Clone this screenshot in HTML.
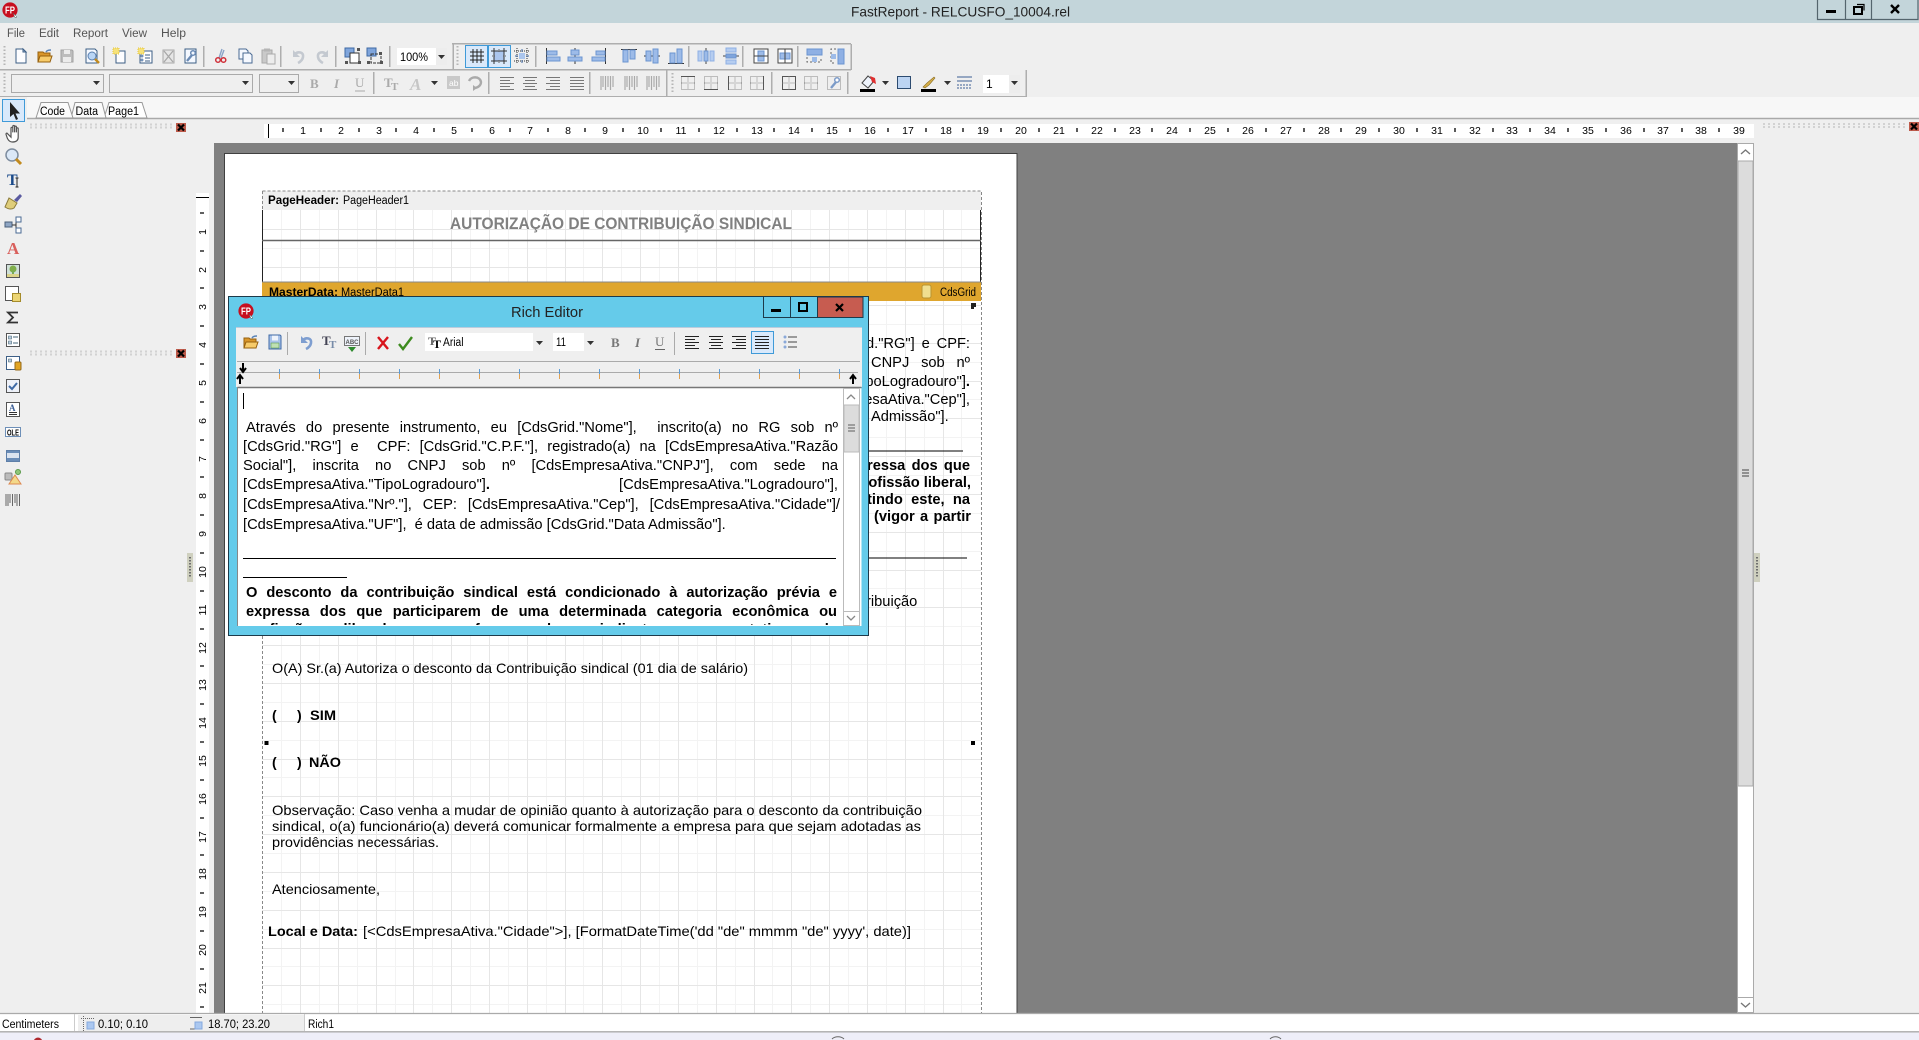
<!DOCTYPE html>
<html lang="pt">
<head>
<meta charset="utf-8">
<title>FastReport - RELCUSFO_10004.rel</title>
<style>
html,body{margin:0;padding:0;width:1919px;height:1040px;overflow:hidden;background:#efefef}
svg{position:absolute;left:0;top:0}
text{font-family:"Liberation Sans",sans-serif;fill:#000}
.j{position:absolute;text-align:justify;text-align-last:justify;font:14.67px/19px "Liberation Sans",sans-serif;color:#000;height:19px;overflow:hidden}
.b{font-weight:bold}
.n{text-align:left;text-align-last:left;white-space:nowrap}
.r{text-align:right;text-align-last:right;white-space:nowrap}
#clip{position:absolute;left:238px;top:388px;width:605px;height:237px;overflow:hidden}
</style>
</head>
<body>
<svg width="1919" height="1040" viewBox="0 0 1919 1040">
<defs>
<g id="doc"><path d="M3 1h7l3 3v11H3z" fill="#fdfdff" stroke="#3d5f86"/><path d="M10 1v3h3z" fill="#c6d6ea" stroke="#3d5f86"/></g>
<g id="folder"><path d="M1 4h5l1 1h6v9H1z" fill="#d9962a" stroke="#96600f"/><path d="M1 14l2-6h12l-2 6z" fill="#f7cb6a" stroke="#96600f"/><path d="M9 4c1-2 3-2 5-2" fill="none" stroke="#5a84b8" stroke-width="1.4"/></g>
<g id="savegrey"><path d="M2 2h11l1 1v11H2z" fill="#bdbdbd" stroke="#a2a2a2"/><rect x="5" y="2" width="6" height="4" fill="#ececec"/><rect x="4" y="9" width="8" height="5" fill="#ececec"/></g>
<g id="saveblue"><path d="M2 1h11l1 1v13H2z" fill="#a9c3ea" stroke="#3f6aa5"/><rect x="5" y="1.500" width="6" height="5" fill="#eef3fb"/><rect x="4" y="9" width="8" height="5" fill="#bfe0b2" stroke="#5e9a55" stroke-width=".6"/></g>
<g id="preview"><path d="M2 1h9l2 2v12H2z" fill="#f4f8ff" stroke="#3d5f86"/><circle cx="8" cy="8" r="4" fill="#b9d5f5" stroke="#5a7fae"/><path d="M11 11l4 4" stroke="#c28a1e" stroke-width="2.400"/></g>
<g id="newpage"><path d="M4 3h9v12H4z" fill="#fdfdff" stroke="#3d5f86"/><rect x="1" y="0" width="6" height="6" fill="#f6e27a" stroke="#e5c53e" stroke-dasharray="1 1"/></g>
<g id="newdlg"><path d="M3 3h12v12H3z" fill="#fdfdff" stroke="#3d5f86"/><path d="M8 7h5M8 10h5M8 13h5" stroke="#3d5f86"/><path d="M4 7h2v2H4zM4 11h2v2H4z" fill="#9dbbe8" stroke="#3d5f86" stroke-width=".5"/><rect x="1" y="0" width="6" height="6" fill="#f6e27a" stroke="#e5c53e" stroke-dasharray="1 1"/></g>
<g id="delpage"><path d="M3 2h11v13H3z" fill="#e6e6e6" stroke="#a8a8a8"/><path d="M4 3l9 11M13 3l-9 11" stroke="#a8a8a8" stroke-width="1.300"/></g>
<g id="wrenchpage"><path d="M3 1h11v14H3z" fill="#f4f8ff" stroke="#3d5f86"/><path d="M5 13l5-6" stroke="#6b8bb5" stroke-width="2.400"/><circle cx="11" cy="5" r="2.300" fill="#f4f8ff" stroke="#6b8bb5" stroke-width="1.500"/></g>
<g id="cut"><path d="M9 1L6 10M11 2l-3 8" stroke="#8aa4c8" stroke-width="1.400"/><circle cx="5" cy="12" r="2.300" fill="none" stroke="#d0303a" stroke-width="1.500"/><circle cx="10.500" cy="12" r="2.300" fill="none" stroke="#d0303a" stroke-width="1.500"/></g>
<g id="copy"><path d="M2 1h7l2 2v8H2z" fill="#f6f9ff" stroke="#4a6a93"/><path d="M6 5h7l2 2v8H6z" fill="#f6f9ff" stroke="#4a6a93"/></g>
<g id="paste"><rect x="2" y="2" width="10" height="13" fill="#c9c9c9" stroke="#a9a9a9"/><rect x="4" y="0.500" width="6" height="3" fill="#b5b5b5"/><path d="M7 6h8v10H7z" fill="#ededed" stroke="#ababab"/></g>
<g id="undo"><path d="M4 6c3-3 9-2 8 3-.5 3-3 5-5 6" fill="none" stroke="#c4c9d0" stroke-width="2.600"/><path d="M2 2v7h7z" fill="#c4c9d0"/></g>
<g id="undob"><path d="M4 6c3-3 9-2 8 3-.5 3-3 5-5 6" fill="none" stroke="#7e9ed0" stroke-width="2.600"/><path d="M2 2v7h7z" fill="#7e9ed0"/></g>
<g id="redo"><path d="M12 6C9 3 3 4 4 9c.5 3 3 5 5 6" fill="none" stroke="#c4c9d0" stroke-width="2.600"/><path d="M14 2v7H7z" fill="#c4c9d0"/></g>
<g id="group"><rect x="0" y="0" width="9" height="9" fill="#7fa5dc" stroke="#3f6aa5"/><rect x="5" y="5" width="9" height="10" fill="#fff" stroke="#333"/><rect x="12" y="0" width="3" height="3" fill="#555"/><rect x="0" y="13" width="3" height="3" fill="#555"/><rect x="13" y="13" width="3" height="3" fill="#555"/></g>
<g id="ungroup"><rect x="0" y="0" width="9" height="8" fill="#7fa5dc" stroke="#3f6aa5"/><rect x="4" y="6" width="10" height="9" fill="none" stroke="#333" stroke-dasharray="3 1"/><rect x="12" y="4" width="3" height="3" fill="#555"/><rect x="0" y="13" width="3" height="3" fill="#555"/><rect x="13" y="13" width="3" height="3" fill="#555"/></g>
<g id="gridi"><path d="M1 4h14M1 8h14M1 12h14M4 1v14M8 1v14M12 1v14" stroke="#222" stroke-width="1"/></g>
<g id="fitg"><rect x="3" y="3" width="10" height="10" fill="#abc6ee"/><path d="M0 3h16M0 13h16M3 0v16M13 0v16" stroke="#333"/><path d="M8 1v3M8 12v3M1 8h3M12 8h3" stroke="#666" stroke-dasharray="1 1"/></g>
<g id="fitg2"><rect x="5" y="5" width="6" height="6" fill="#abc6ee"/><path d="M0 3h16M0 13h16M3 0v16M13 0v16" stroke="#333" stroke-dasharray="1 1"/><path d="M8 1v3M8 12v3M1 8h3M12 8h3" stroke="#3f6aa5"/></g>
<g id="al"><path d="M1.500 0v16" stroke="#333"/><rect x="2" y="3" width="10" height="4" fill="#9dbbe8" stroke="#6b94d0"/><rect x="2" y="9" width="13" height="4" fill="#9dbbe8" stroke="#6b94d0"/></g>
<g id="ac"><path d="M8 0v16" stroke="#333"/><rect x="4" y="2" width="8" height="5" fill="#9dbbe8" stroke="#6b94d0"/><rect x="1" y="9" width="14" height="4" fill="#9dbbe8" stroke="#6b94d0"/></g>
<g id="ar"><path d="M14.500 0v16" stroke="#333"/><rect x="5" y="3" width="9" height="4" fill="#9dbbe8" stroke="#6b94d0"/><rect x="1" y="9" width="13" height="4" fill="#9dbbe8" stroke="#6b94d0"/></g>
<g id="at"><path d="M0 1.500h16" stroke="#333"/><rect x="2" y="2" width="5" height="12" fill="#9dbbe8" stroke="#6b94d0"/><rect x="9" y="2" width="5" height="9" fill="#9dbbe8" stroke="#6b94d0"/></g>
<g id="am"><path d="M0 8h16" stroke="#333"/><rect x="2" y="3" width="5" height="10" fill="#9dbbe8" stroke="#6b94d0"/><rect x="9" y="1" width="5" height="14" fill="#9dbbe8" stroke="#6b94d0"/></g>
<g id="ab"><path d="M0 15.500h16" stroke="#333"/><rect x="2" y="5" width="5" height="10" fill="#9dbbe8" stroke="#6b94d0"/><rect x="9" y="1" width="5" height="14" fill="#9dbbe8" stroke="#6b94d0"/></g>
<g id="sh"><path d="M8 0v16" stroke="#444"/><rect x="0" y="3" width="4" height="10" fill="#b5cdf0" stroke="#8fb0e4"/><rect x="6" y="3" width="4" height="10" fill="#9dbbe8" stroke="#6b94d0"/><rect x="12" y="3" width="4" height="10" fill="#b5cdf0" stroke="#8fb0e4"/></g>
<g id="sv"><path d="M0 8h16" stroke="#444"/><rect x="3" y="0" width="10" height="4" fill="#b5cdf0" stroke="#8fb0e4"/><rect x="3" y="6" width="10" height="4" fill="#7fa5dc" stroke="#6b94d0"/><rect x="3" y="12" width="10" height="4" fill="#b5cdf0" stroke="#8fb0e4"/></g>
<g id="ch"><rect x="1" y="1" width="14" height="14" fill="#fff" stroke="#444"/><rect x="5" y="3" width="6" height="10" fill="#9dbbe8" stroke="#6b94d0"/><path d="M1 8h14" stroke="#444"/></g>
<g id="cv"><rect x="1" y="1" width="14" height="14" fill="#fff" stroke="#444"/><rect x="3" y="5" width="10" height="6" fill="#9dbbe8" stroke="#6b94d0"/><path d="M8 1v14" stroke="#444"/></g>
<g id="w1"><rect x="1" y="1" width="15" height="6" fill="#8fb0e4" stroke="#6b94d0"/><path d="M1 9v5h14V9" fill="none" stroke="#666" stroke-dasharray="2 2"/><rect x="6" y="9" width="5" height="5" fill="#9dbbe8"/></g>
<g id="w2"><rect x="8" y="1" width="6" height="15" fill="#8fb0e4" stroke="#6b94d0"/><path d="M6 1H1v14h5" fill="none" stroke="#666" stroke-dasharray="2 2"/><rect x="1" y="6" width="5" height="5" fill="#9dbbe8"/></g>
<g id="frame1"><path d="M1.500 1.500h13v13h-13z" fill="none" stroke="#888" stroke-dasharray="1 1"/><path d="M8 1.500v13M1.500 8h13" stroke="#888" stroke-dasharray="1 1"/><path d="M1 1.500h14" stroke="#555"/></g>
<g id="frame2"><path d="M1.500 1.500h13v13h-13z" fill="none" stroke="#888" stroke-dasharray="1 1"/><path d="M8 1.500v13M1.500 8h13" stroke="#888" stroke-dasharray="1 1"/><path d="M1 14.500h14" stroke="#555"/></g>
<g id="frame3"><path d="M1.500 1.500h13v13h-13z" fill="none" stroke="#888" stroke-dasharray="1 1"/><path d="M8 1.500v13M1.500 8h13" stroke="#888" stroke-dasharray="1 1"/><path d="M1.500 1v14" stroke="#555"/></g>
<g id="frame4"><path d="M1.500 1.500h13v13h-13z" fill="none" stroke="#888" stroke-dasharray="1 1"/><path d="M8 1.500v13M1.500 8h13" stroke="#888" stroke-dasharray="1 1"/><path d="M14.500 1v14" stroke="#555"/></g>
<g id="frameall"><rect x="1.500" y="1.500" width="13" height="13" fill="none" stroke="#555"/><path d="M8 1.500v13M1.500 8h13" stroke="#888" stroke-dasharray="1 1"/></g>
<g id="framenone"><rect x="1.500" y="1.500" width="13" height="13" fill="none" stroke="#888" stroke-dasharray="1 1"/><path d="M8 1.500v13M1.500 8h13" stroke="#888" stroke-dasharray="1 1"/></g>
<g id="framew"><rect x="1.500" y="1.500" width="13" height="13" fill="none" stroke="#888" stroke-dasharray="1 1"/><path d="M5 13l5-6" stroke="#7c9bc8" stroke-width="2.400"/><circle cx="11" cy="5" r="2.300" fill="#fff" stroke="#7c9bc8" stroke-width="1.500"/></g>
<g id="bar"><path d="M1 0v14M3 0v11M5.500 0v14M8 0v11M10.500 0v14M13 0v11" stroke="#aaa" stroke-width="1.200"/></g>
<g id="textl"><path d="M0 1.500h14M0 4.500h10M0 7.500h14M0 10.500h10M0 13.500h14" stroke="#777"/></g>
<g id="textc"><path d="M0 1.500h14M2 4.500h10M0 7.500h14M2 10.500h10M0 13.500h14" stroke="#777"/></g>
<g id="textr"><path d="M0 1.500h14M4 4.500h10M0 7.500h14M4 10.500h10M0 13.500h14" stroke="#777"/></g>
<g id="textj"><path d="M0 1.500h14M0 4.500h14M0 7.500h14M0 10.500h14M0 13.500h14" stroke="#777"/></g>
<g id="dltl"><path d="M0 1.500h14M0 4.500h10M0 7.500h14M0 10.500h10M0 13.500h14" stroke="#222"/></g>
<g id="dltc"><path d="M0 1.500h14M2 4.500h10M0 7.500h14M2 10.500h10M0 13.500h14" stroke="#222"/></g>
<g id="dltr"><path d="M0 1.500h14M4 4.500h10M0 7.500h14M4 10.500h10M0 13.500h14" stroke="#222"/></g>
<g id="dltj"><path d="M0 1.500h14M0 4.500h14M0 7.500h14M0 10.500h14M0 13.500h14" stroke="#222"/></g>
<g id="fp"><circle cx="8" cy="8" r="7.600" fill="#c70f1f"/><text x="8" y="11.500" text-anchor="middle" font-size="10" font-weight="bold" style="fill:#fff" textLength="10" lengthAdjust="spacingAndGlyphs">FP</text><path d="M11 11l4 4-2 .5z" fill="#fff" stroke="#555" stroke-width=".5"/></g>
<g id="redx"><rect width="10" height="9" fill="#bd5a4a"/><path d="M2 1.500l6 6M8 1.500l-6 6" stroke="#000" stroke-width="2.200"/></g>
<g id="downarr"><path d="M0 0h7l-3.500 4z" fill="#333"/></g>
<g id="sgrip"><rect width="6" height="29" fill="#cfd0bf"/><path d="M3 4v21" stroke="#6e6e6e" stroke-width="2" stroke-dasharray="1.500 1.500"/></g>
</defs>

<!-- base -->
<rect width="1919" height="1040" fill="#efefef"/>
<rect width="1919" height="23" fill="#c3d5da"/>
<use href="#fp" x="2" y="2"/>
<text x="851" y="16.500" font-size="14" textLength="219" lengthAdjust="spacingAndGlyphs" style="fill:#222">FastReport - RELCUSFO_10004.rel</text>
<g fill="none" stroke="#54656d" stroke-width="1.200"><path d="M1817.500 0v19.500H1918V0M1845.500 0v19.500M1871.500 0v19.500"/></g>
<rect x="1826" y="10" width="10" height="3" fill="#000"/>
<rect x="1854" y="7" width="8" height="7" fill="none" stroke="#000" stroke-width="2"/><path d="M1857 4.500h7v6" fill="none" stroke="#000" stroke-width="1.200"/>
<path d="M1891 5l8 8M1899 5l-8 8" stroke="#000" stroke-width="2.400"/>

<!-- menu -->
<g font-size="11.500">
<text x="7" y="37" style="fill:#555" textLength="18" lengthAdjust="spacingAndGlyphs">File</text>
<text x="39" y="37" style="fill:#555" textLength="20" lengthAdjust="spacingAndGlyphs">Edit</text>
<text x="73" y="37" style="fill:#555" textLength="35" lengthAdjust="spacingAndGlyphs">Report</text>
<text x="122" y="37" style="fill:#555" textLength="25" lengthAdjust="spacingAndGlyphs">View</text>
<text x="161" y="37" style="fill:#555" textLength="25" lengthAdjust="spacingAndGlyphs">Help</text>
</g>

<!-- toolbars frame -->
<g stroke="#aeaeae" fill="none" stroke-width="1.500" shape-rendering="crispEdges">
<path d="M0 69.500H851M851 44v26M453 44v26M452 43.500H851"/>
<path d="M0 96.500H1026M1026 70v27M666.500 70v27"/>
<path d="M103.500 46v21M203.500 46v21M280.500 46v21M335.500 46v21M389.500 46v21M535.500 46v21M688.500 46v21M742.500 46v21M797.500 46v21"/>
<path d="M373.500 72v22M488.500 72v22M589.500 72v22M771.500 72v22M847.500 72v22"/>
</g>
<path d="M4.500 46v20M457.500 46v20M4.500 73v20M672.500 73v20" stroke="#b5b5b5" stroke-width="2" stroke-dasharray="1.500 2"/>

<!-- toolbar 1 icons -->
<use href="#doc" x="13" y="48"/><use href="#folder" x="37" y="48"/><use href="#savegrey" x="59" y="48"/><use href="#preview" x="84" y="48"/>
<use href="#newpage" x="112" y="48"/><use href="#newdlg" x="137" y="48"/><use href="#delpage" x="160" y="48"/><use href="#wrenchpage" x="182" y="48"/>
<use href="#cut" x="213" y="48"/><use href="#copy" x="237" y="48"/><use href="#paste" x="260" y="48"/>
<use href="#undo" x="291" y="48"/><use href="#redo" x="314" y="48"/>
<use href="#group" x="345" y="48"/><use href="#ungroup" x="367" y="48"/>
<rect x="397" y="48" width="50" height="17" fill="#fff"/><rect x="436" y="48" width="11" height="17" fill="#ededed"/>
<text x="400" y="61" font-size="12" textLength="28" lengthAdjust="spacingAndGlyphs">100%</text>
<use href="#downarr" x="438" y="55"/>
<rect x="465.500" y="45.500" width="22" height="22" fill="#d9e9fb" stroke="#3f9ad8"/>
<rect x="488.500" y="45.500" width="22" height="22" fill="#d9e9fb" stroke="#3f9ad8"/>
<use href="#gridi" x="469" y="48"/><use href="#fitg" x="491" y="48"/><use href="#fitg2" x="514" y="48"/>
<use href="#al" x="545" y="48"/><use href="#ac" x="567" y="48"/><use href="#ar" x="591" y="48"/>
<use href="#at" x="621" y="48"/><use href="#am" x="644" y="48"/><use href="#ab" x="668" y="48"/>
<use href="#sh" x="698" y="48"/><use href="#sv" x="723" y="48"/>
<use href="#ch" x="753" y="48"/><use href="#cv" x="777" y="48"/>
<use href="#w1" x="806" y="48"/><use href="#w2" x="830" y="48"/>

<!-- toolbar 2 -->
<g fill="#efefef" stroke="#aaa" shape-rendering="crispEdges"><rect x="11.500" y="74.500" width="92" height="18"/><rect x="109.500" y="74.500" width="143" height="18"/><rect x="259.500" y="74.500" width="39" height="18"/></g>
<use href="#downarr" x="93" y="81"/><use href="#downarr" x="242" y="81"/><use href="#downarr" x="288" y="81"/>
<text x="310" y="88" font-size="13" font-weight="bold" style="fill:#aaa;font-family:'Liberation Serif',serif">B</text>
<text x="334" y="88" font-size="13" font-weight="bold" font-style="italic" style="fill:#aaa;font-family:'Liberation Serif',serif">I</text>
<text x="355" y="87" font-size="13" style="fill:#aaa;font-family:'Liberation Serif',serif">U</text>
<text x="384" y="87" font-size="13" font-weight="bold" style="fill:#aaa;font-family:'Liberation Serif',serif">T</text>
<text x="391" y="90" font-size="11" font-weight="bold" style="fill:#aaa;font-family:'Liberation Serif',serif">T</text>
<text x="410" y="90" font-size="17" font-weight="bold" font-style="italic" style="fill:#c6c6c6;font-family:'Liberation Serif',serif">A</text>
<path d="M355 91h10" stroke="#aaa"/>
<use href="#downarr" x="431" y="81"/>
<rect x="447" y="76" width="13" height="13" fill="#c9c9c9"/><text x="449" y="86" font-size="8.500" style="fill:#fff">ab</text>
<path d="M469 81c2-5 11-5 12 1 0 4-4 6-7 6" fill="none" stroke="#aaa" stroke-width="2.400"/><path d="M477 88l-4-3v6z" fill="#aaa"/>
<use href="#textl" x="500" y="76"/><use href="#textc" x="523" y="76"/><use href="#textr" x="546" y="76"/><use href="#textj" x="570" y="76"/>
<use href="#bar" x="600" y="76"/><use href="#bar" x="624" y="76"/><use href="#bar" x="646" y="76"/>
<use href="#frame1" x="680" y="75"/><use href="#frame2" x="703" y="75"/><use href="#frame3" x="727" y="75"/><use href="#frame4" x="749" y="75"/>
<use href="#frameall" x="781" y="75"/><use href="#framenone" x="803" y="75"/><use href="#framew" x="826" y="75"/>
<path d="M862 83l6-7 6 5-6 7z" fill="#eef3fb" stroke="#444"/><path d="M870 76l5 2 1 6-4-2z" fill="#e03030"/><rect x="860" y="89" width="15" height="3" fill="#000"/>
<use href="#downarr" x="882" y="81"/>
<rect x="897.500" y="76.500" width="13" height="12" fill="#bcd4f2" stroke="#2c4b70"/>
<path d="M923 87l4-4 7-6 1 1-6 7-4 3z" fill="#d7b04a" stroke="#8a6d24" stroke-width=".6"/><rect x="921" y="89" width="15" height="3" fill="#000"/>
<use href="#downarr" x="944" y="81"/>
<path d="M957 77h15M957 81h15" stroke="#3d5f96"/><path d="M957 85h15M957 88h15" stroke="#3d5f96" stroke-dasharray="2 1"/>
<rect x="983" y="75" width="37" height="18" fill="#fff"/><rect x="1009" y="75" width="11" height="18" fill="#ededed"/>
<text x="986" y="88" font-size="12">1</text><use href="#downarr" x="1011" y="81"/>

<!-- tab strip -->
<rect x="0" y="97" width="1919" height="21" fill="#f7f7f7"/>
<rect x="0" y="97" width="27" height="25" fill="#efefef"/>
<path d="M27 118.500H1919" stroke="#a9a9a9" stroke-width="1.500"/>
<path d="M104 118l5-15.500h33l5 15.500z" fill="#fff" stroke="#999"/>
<path d="M71 118l4-15.500h27l4 15.500z" fill="#fbfbfb" stroke="#999"/>
<path d="M36 118l5-15.500h27l5 15.500z" fill="#fbfbfb" stroke="#999"/>
<text x="40" y="115" font-size="11.500" textLength="25" lengthAdjust="spacingAndGlyphs">Code</text>
<text x="75.500" y="115" font-size="11.500" textLength="22.500" lengthAdjust="spacingAndGlyphs">Data</text>
<text x="108" y="115" font-size="11.500" textLength="31" lengthAdjust="spacingAndGlyphs">Page1</text>
<rect x="2.500" y="99.500" width="22" height="22" fill="#d9e9fb" stroke="#3f9ad8"/>
<path d="M10 102v15l3.500-3 2.500 6 2-1-2.500-5.500H20z" fill="#222"/>

<!-- grips -->
<g stroke="#d2d2d2" stroke-width="2" stroke-dasharray="2 3">
<path d="M30 124.500h144M30 127.500h144M30 351.500h144M30 354.500h144M1763 124h145M1763 127h145"/>
</g>
<use href="#redx" x="176" y="123"/><use href="#redx" x="176" y="349"/><use href="#redx" x="1909" y="122"/>

<!-- left tools -->
<g transform="translate(5,124)"><path d="M2 8l3 3V3.500c0-1 1.500-1 1.500 0V7V2c0-1 1.500-1 1.500 0v5V2.500c0-1 1.500-1 1.500 0V7V4c0-1 1.500-1 1.500 0v7c0 3-2 4-5 4-2 0-3-1-4-3L1 9c-.5-1 .5-2 1-1z" fill="#fff" stroke="#555" transform="scale(1.2)"/></g>
<g transform="translate(5,148)"><circle cx="7" cy="7" r="6" fill="#dbe8f7" stroke="#7e8d9f" stroke-width="1.500"/><path d="M11 11l5 5" stroke="#c28a1e" stroke-width="3"/></g>
<text x="7" y="185" font-size="16" font-weight="bold" style="fill:#1a4a8a;font-family:'Liberation Serif',serif">T</text><path d="M17 178v9M15.500 178h3M15.500 187h3" stroke="#222"/>
<path d="M5 207l4-9 8 5-3 5c-3 2-6 1-9-1z" fill="#dfcd7a" stroke="#8a7a3a"/><path d="M14 200l6-6 2 2-5 6z" fill="#5a5aa0"/>
<path d="M5 222h7v5H5z" fill="#8fa6c4" stroke="#4a5f7a"/><path d="M12 225h4M16 218v14M16 218h2M16 232h2" stroke="#333"/><path d="M16 217h5v5h-5zM16 228h5v5h-5z" fill="#fff" stroke="#4a6a93"/>
<text x="7" y="254" font-size="17" font-weight="bold" style="fill:#d9605c;font-family:'Liberation Serif',serif">A</text>
<rect x="6.500" y="264.500" width="13" height="13" fill="#cfe0d8" stroke="#555"/><circle cx="13" cy="269" r="3.500" fill="#7fae4a"/><rect x="12" y="271" width="2" height="4" fill="#7a5"/><rect x="7" y="274" width="12" height="3" fill="#dcd48a"/>
<rect x="5.500" y="286.500" width="13" height="14" fill="#fff" stroke="#555"/><rect x="12.500" y="293.500" width="8" height="8" fill="#ecd574" stroke="#a58b2a"/>
<path d="M18 312.500H8l5 5-5 5h10" fill="none" stroke="#333" stroke-width="1.800"/>
<rect x="6.500" y="333.500" width="13" height="13" fill="#fff" stroke="#555"/><path d="M8.500 336h3v3h-3zM8.500 341h3v3h-3z" fill="#bcd" stroke="#467" stroke-width=".6"/><path d="M13 337h5M13 343h5" stroke="#467"/>
<rect x="6.500" y="356.500" width="13" height="13" fill="#fff" stroke="#3d5f86"/><path d="M8.500 359h3v3h-3z" fill="#bcd" stroke="#467" stroke-width=".6"/><rect x="15" y="362" width="6" height="8" rx="1" fill="#e2a523" stroke="#94691a"/>
<rect x="6.500" y="379.500" width="13" height="13" fill="#eef1f8" stroke="#555"/><path d="M9 386l3 3 5-6" fill="none" stroke="#3f6aa5" stroke-width="2"/>
<rect x="6.500" y="402.500" width="13" height="14" fill="#fff" stroke="#555"/><text x="9" y="411" font-size="9" style="fill:#3d5f96;font-family:'Liberation Serif',serif" font-weight="bold">A</text><path d="M9 412.500h8M9 414.500h8" stroke="#333"/>
<rect x="5.500" y="427.500" width="15" height="9" fill="#fff" stroke="#6d8fb8"/><text x="7" y="435.500" font-size="8.500" font-weight="bold" textLength="12" lengthAdjust="spacingAndGlyphs">OLE</text>
<rect x="6.500" y="450.500" width="13" height="11" fill="#dbe4f0" stroke="#5e7fa8"/><rect x="7" y="451" width="12" height="2" fill="#6a8db8"/><rect x="7" y="458" width="12" height="3" fill="#6a8db8"/>
<rect x="5" y="473" width="7" height="7" rx="1" fill="#bbb" stroke="#888"/><path d="M15 475l6 9h-12z" fill="#f3d98a" stroke="#dd8a50"/><circle cx="18" cy="472" r="2.500" fill="#8fc67a" stroke="#5a9a4a"/>
<path d="M6 494v12M8 494v12M10 494v9M12.500 494v12M15 494v9M17 494v12M19.500 494v12" stroke="#666" stroke-width="1"/>

<!-- workspace -->
<rect x="214" y="143" width="1523" height="870" fill="#808080"/>
<rect x="224.500" y="153.500" width="792.500" height="860" fill="#fff" stroke="#404040"/>

<!-- grid -->
<g stroke="#f3f3f3" fill="none" shape-rendering="crispEdges">
<path d="M281.500 210V1013M319.500 210V1013M357.500 210V1013M395.500 210V1013M432.500 210V1013M470.500 210V1013M508.500 210V1013M546.500 210V1013M583.500 210V1013M621.500 210V1013M659.500 210V1013M697.500 210V1013M735.500 210V1013M772.500 210V1013M810.500 210V1013M848.500 210V1013M886.500 210V1013M924.500 210V1013M961.500 210V1013"/>
<path d="M262 248.500H981M262 324.500H981M262 362.500H981M262 399.500H981M262 437.500H981M262 475.500H981M262 513.500H981M262 551.500H981M262 588.500H981M262 626.500H981M262 664.500H981M262 702.500H981M262 740.500H981M262 777.500H981M262 815.500H981M262 853.500H981M262 891.500H981M262 929.500H981M262 966.500H981M262 1004.500H981"/>
</g>
<g stroke="#e6e6e6" fill="none" shape-rendering="crispEdges">
<path d="M300.500 210V1013M338.500 210V1013M376.500 210V1013M413.500 210V1013M451.500 210V1013M489.500 210V1013M527.500 210V1013M565.500 210V1013M602.500 210V1013M640.500 210V1013M678.500 210V1013M716.500 210V1013M754.500 210V1013M791.500 210V1013M829.500 210V1013M867.500 210V1013M905.500 210V1013M943.500 210V1013"/>
<path d="M262 229.500H981M262 267.500H981M262 305.500H981M262 343.500H981M262 381.500H981M262 418.500H981M262 456.500H981M262 494.500H981M262 532.500H981M262 570.500H981M262 607.500H981M262 645.500H981M262 683.500H981M262 721.500H981M262 759.500H981M262 796.500H981M262 834.500H981M262 872.500H981M262 910.500H981M262 948.500H981M262 985.500H981"/>
</g>

<!-- bands -->
<rect x="262" y="191" width="719" height="19" fill="#efefef"/>
<path d="M262.500 191H981.500V1013M262.500 191V1013" fill="none" stroke="#888" stroke-dasharray="3 2"/>
<path d="M262.500 210v72M980.500 210v72" stroke="#222"/>
<path d="M262 240.500H981" stroke="#666" stroke-width="1.400"/>
<path d="M262 282H981" stroke="#888"/>
<rect x="262" y="282.500" width="719" height="18.500" fill="#dfa62e"/>
<text x="268" y="204" font-size="11.500" font-weight="bold" textLength="71" lengthAdjust="spacingAndGlyphs">PageHeader:</text>
<text x="343" y="204" font-size="11.500" textLength="66" lengthAdjust="spacingAndGlyphs">PageHeader1</text>
<text x="269" y="296" font-size="11.500" font-weight="bold" textLength="69" lengthAdjust="spacingAndGlyphs">MasterData:</text>
<text x="341" y="296" font-size="11.500" textLength="63" lengthAdjust="spacingAndGlyphs">MasterData1</text>
<rect x="922" y="285" width="9" height="13" rx="2" fill="#f0df8f" stroke="#b89432"/>
<text x="940" y="296" font-size="11.500" textLength="36" lengthAdjust="spacingAndGlyphs">CdsGrid</text>
<text x="450" y="229" font-size="17" font-weight="bold" textLength="342" lengthAdjust="spacingAndGlyphs" style="fill:#808080">AUTORIZAÇÃO DE CONTRIBUIÇÃO SINDICAL</text>
<path d="M971 303h5v4h-2v2h-3z" fill="#222"/>

<!-- page text visible -->
<path d="M869 451h94M869 558h98" stroke="#000"/>
<text x="272" y="673" font-size="14" textLength="476" lengthAdjust="spacingAndGlyphs">O(A) Sr.(a) Autoriza o desconto da Contribuição sindical (01 dia de salário)</text>
<text x="272" y="720" font-size="14" font-weight="bold">(</text><text x="297" y="720" font-size="14" font-weight="bold">)</text><text x="310" y="720" font-size="14" font-weight="bold" textLength="26" lengthAdjust="spacingAndGlyphs">SIM</text>
<text x="272" y="767" font-size="14" font-weight="bold">(</text><text x="297" y="767" font-size="14" font-weight="bold">)</text><text x="309" y="767" font-size="14" font-weight="bold" textLength="32" lengthAdjust="spacingAndGlyphs">NÃO</text>
<rect x="264.500" y="741" width="4" height="4" fill="#000"/><rect x="971" y="741" width="4" height="4" fill="#000"/>
<text x="272" y="815" font-size="14" textLength="650" lengthAdjust="spacingAndGlyphs">Observação: Caso venha a mudar de opinião quanto à autorização para o desconto da contribuição</text>
<text x="272" y="831" font-size="14" textLength="649" lengthAdjust="spacingAndGlyphs">sindical, o(a) funcionário(a) deverá comunicar formalmente a empresa para que sejam adotadas as</text>
<text x="272" y="847" font-size="14" textLength="167" lengthAdjust="spacingAndGlyphs">providências necessárias.</text>
<text x="272" y="894" font-size="14" textLength="108" lengthAdjust="spacingAndGlyphs">Atenciosamente,</text>
<text x="268" y="936" font-size="14" font-weight="bold" textLength="90" lengthAdjust="spacingAndGlyphs">Local e Data:</text>
<text x="363" y="936" font-size="14" textLength="548" lengthAdjust="spacingAndGlyphs">[&lt;CdsEmpresaAtiva."Cidade"&gt;], [FormatDateTime('dd "de" mmmm "de" yyyy', date)]</text>

<!-- rulers -->
<rect x="264" y="124" width="1490" height="14" fill="#fff"/>
<rect x="196" y="193" width="13" height="820" fill="#fff"/>
<path d="M268.500 124v14M196 197.500h13" stroke="#000"/>
<path d="M283 128v4M321 128v4M359 128v4M396 128v4M434 128v4M472 128v4M510 128v4M548 128v4M585 128v4M623 128v4M661 128v4M699 128v4M737 128v4M774 128v4M812 128v4M850 128v4M888 128v4M926 128v4M963 128v4M1001 128v4M1039 128v4M1077 128v4M1115 128v4M1152 128v4M1190 128v4M1228 128v4M1266 128v4M1304 128v4M1341 128v4M1379 128v4M1417 128v4M1455 128v4M1493 128v4M1530 128v4M1568 128v4M1606 128v4M1644 128v4M1682 128v4M1719 128v4" stroke="#000" stroke-width="1.300"/>
<path d="M200 213h4M200 251h4M200 288h4M200 326h4M200 364h4M200 402h4M200 440h4M200 477h4M200 515h4M200 553h4M200 591h4M200 629h4M200 666h4M200 704h4M200 742h4M200 780h4M200 818h4M200 855h4M200 893h4M200 931h4M200 969h4M200 1007h4" stroke="#000" stroke-width="1.300"/>
<g font-size="10.500">
<text x="303" y="134" text-anchor="middle">1</text><text x="341" y="134" text-anchor="middle">2</text><text x="379" y="134" text-anchor="middle">3</text><text x="416" y="134" text-anchor="middle">4</text><text x="454" y="134" text-anchor="middle">5</text><text x="492" y="134" text-anchor="middle">6</text><text x="530" y="134" text-anchor="middle">7</text><text x="568" y="134" text-anchor="middle">8</text><text x="605" y="134" text-anchor="middle">9</text><text x="643" y="134" text-anchor="middle">10</text><text x="681" y="134" text-anchor="middle">11</text><text x="719" y="134" text-anchor="middle">12</text><text x="757" y="134" text-anchor="middle">13</text><text x="794" y="134" text-anchor="middle">14</text><text x="832" y="134" text-anchor="middle">15</text><text x="870" y="134" text-anchor="middle">16</text><text x="908" y="134" text-anchor="middle">17</text><text x="946" y="134" text-anchor="middle">18</text><text x="983" y="134" text-anchor="middle">19</text><text x="1021" y="134" text-anchor="middle">20</text><text x="1059" y="134" text-anchor="middle">21</text><text x="1097" y="134" text-anchor="middle">22</text><text x="1135" y="134" text-anchor="middle">23</text><text x="1172" y="134" text-anchor="middle">24</text><text x="1210" y="134" text-anchor="middle">25</text><text x="1248" y="134" text-anchor="middle">26</text><text x="1286" y="134" text-anchor="middle">27</text><text x="1324" y="134" text-anchor="middle">28</text><text x="1361" y="134" text-anchor="middle">29</text><text x="1399" y="134" text-anchor="middle">30</text><text x="1437" y="134" text-anchor="middle">31</text><text x="1475" y="134" text-anchor="middle">32</text><text x="1512" y="134" text-anchor="middle">33</text><text x="1550" y="134" text-anchor="middle">34</text><text x="1588" y="134" text-anchor="middle">35</text><text x="1626" y="134" text-anchor="middle">36</text><text x="1663" y="134" text-anchor="middle">37</text><text x="1701" y="134" text-anchor="middle">38</text><text x="1739" y="134" text-anchor="middle">39</text>
<text transform="translate(206,232) rotate(-90)" text-anchor="middle">1</text><text transform="translate(206,270) rotate(-90)" text-anchor="middle">2</text><text transform="translate(206,307) rotate(-90)" text-anchor="middle">3</text><text transform="translate(206,345) rotate(-90)" text-anchor="middle">4</text><text transform="translate(206,383) rotate(-90)" text-anchor="middle">5</text><text transform="translate(206,421) rotate(-90)" text-anchor="middle">6</text><text transform="translate(206,459) rotate(-90)" text-anchor="middle">7</text><text transform="translate(206,496) rotate(-90)" text-anchor="middle">8</text><text transform="translate(206,534) rotate(-90)" text-anchor="middle">9</text><text transform="translate(206,572) rotate(-90)" text-anchor="middle">10</text><text transform="translate(206,610) rotate(-90)" text-anchor="middle">11</text><text transform="translate(206,648) rotate(-90)" text-anchor="middle">12</text><text transform="translate(206,685) rotate(-90)" text-anchor="middle">13</text><text transform="translate(206,723) rotate(-90)" text-anchor="middle">14</text><text transform="translate(206,761) rotate(-90)" text-anchor="middle">15</text><text transform="translate(206,799) rotate(-90)" text-anchor="middle">16</text><text transform="translate(206,837) rotate(-90)" text-anchor="middle">17</text><text transform="translate(206,874) rotate(-90)" text-anchor="middle">18</text><text transform="translate(206,912) rotate(-90)" text-anchor="middle">19</text><text transform="translate(206,950) rotate(-90)" text-anchor="middle">20</text><text transform="translate(206,988) rotate(-90)" text-anchor="middle">21</text>
</g>

<!-- main scrollbar -->
<rect x="1737.500" y="143.500" width="16" height="869" fill="#fff" stroke="#aaa"/>
<rect x="1738" y="161" width="15" height="625" fill="#dcdcdc" stroke="#aaa"/>
<path d="M1741 154l4.500-4 4.500 4" fill="none" stroke="#777" stroke-width="1.400"/>
<path d="M1738 997.500h15" stroke="#aaa"/><path d="M1741 1003l4.500 4 4.500-4" fill="none" stroke="#777" stroke-width="1.400"/>
<path d="M1742 470h7M1742 473h7M1742 476h7" stroke="#777" stroke-width="1.500"/>
<use href="#sgrip" x="187" y="553"/><use href="#sgrip" x="1754" y="553"/>

<!-- status -->
<rect x="0" y="1013" width="1919" height="19" fill="#fff"/>
<rect x="78" y="1015" width="226" height="16" fill="#eee"/>
<path d="M0 1013.500H1919M0 1031.800H1919" stroke="#aaa" stroke-width="1.300"/>
<path d="M74.500 1014v17M304.500 1014v17" stroke="#ccc"/>
<rect x="0" y="1032.500" width="1919" height="7.500" fill="#eeeef8"/>
<circle cx="38" cy="1042" r="4.500" fill="#b02a30"/>
<path d="M832 1039c3-3 9-3 12 0M1270 1039c3-3 8-3 11 0" fill="none" stroke="#666" stroke-width="1"/>
<text x="2" y="1028" font-size="11.500" textLength="57" lengthAdjust="spacingAndGlyphs">Centimeters</text>
<path d="M81 1018.500h14M83.500 1016v15" stroke="#666" stroke-dasharray="1 1"/><rect x="87" y="1022" width="7" height="7" fill="#abc8f0" stroke="#85a9de"/>
<text x="98" y="1028" font-size="11.500" textLength="50" lengthAdjust="spacingAndGlyphs">0.10; 0.10</text>
<path d="M190 1017.500h12M190 1029h6" stroke="#666"/><rect x="195" y="1022" width="7" height="7" fill="#abc8f0" stroke="#85a9de"/>
<text x="208" y="1028" font-size="11.500" textLength="62" lengthAdjust="spacingAndGlyphs">18.70; 23.20</text>
<text x="308" y="1028" font-size="11.500" textLength="26" lengthAdjust="spacingAndGlyphs">Rich1</text>
</svg>

<!-- page text peeking out behind dialog -->
<div class="j" style="left:866px;top:335px;width:104px">d."RG"] e CPF:</div>
<div class="j" style="left:871px;top:354px;width:99px">CNPJ sob nº</div>
<div class="j r" style="left:820px;top:373px;width:150px">poLogradouro"]<b>.</b></div>
<div class="j r" style="left:820px;top:391px;width:150px">esaAtiva."Cep"],</div>
<div class="j n" style="left:871px;top:408px;width:100px">Admissão"].</div>
<div class="j b" style="left:867px;top:457px;width:103px">ressa dos que</div>
<div class="j b r" style="left:820px;top:474px;width:151px">ofissão liberal,</div>
<div class="j b" style="left:867px;top:491px;width:103px">tindo este, na</div>
<div class="j b" style="left:874px;top:508px;width:97px">(vigor a partir</div>
<div class="j n" style="left:866px;top:593px;width:60px">ribuição</div>

<!-- Rich Editor dialog -->
<svg width="1919" height="1040" viewBox="0 0 1919 1040" style="pointer-events:none">
<rect x="228.500" y="296.500" width="640" height="339" fill="#65cbea" stroke="#1d3a4a"/>
<use href="#fp" x="238" y="303"/>
<text x="511" y="317" font-size="14.500" textLength="72" lengthAdjust="spacingAndGlyphs" style="fill:#222">Rich Editor</text>
<rect x="763" y="297" width="55" height="20" fill="#65cbea"/>
<rect x="817.500" y="297" width="45.500" height="20.500" fill="#c75c50" stroke="#1d3a4a"/>
<path d="M763.500 297v20.500H818M790.500 297v20.500" fill="none" stroke="#1d3a4a"/>
<rect x="771" y="309" width="10" height="3" fill="#000"/>
<rect x="799" y="303" width="8" height="8" fill="none" stroke="#000" stroke-width="2"/>
<path d="M836 304l7 7M843 304l-7 7" stroke="#000" stroke-width="2.200"/>
<rect x="236" y="327" width="626" height="60" fill="#efefef"/>
<path d="M236 327.500H862" stroke="#bcd" stroke-width="1"/>
<!-- dialog toolbar -->
<use href="#folder" x="243" y="334"/><use href="#saveblue" x="267" y="334"/>
<path d="M287.500 332v23M365.500 332v23M674.500 332v23" stroke="#aaa"/>
<use href="#undob" x="299" y="334"/>
<text x="322" y="345" font-size="13" font-weight="bold" style="fill:#445;font-family:'Liberation Serif',serif">T</text><text x="329" y="348" font-size="11" font-weight="bold" style="fill:#778ba8;font-family:'Liberation Serif',serif">T</text>
<rect x="344.500" y="336.500" width="15" height="9" fill="#eef3fb" stroke="#777"/><text x="345.500" y="344" font-size="6.500" font-weight="bold" style="fill:#555" textLength="13" lengthAdjust="spacingAndGlyphs">ABC</text><path d="M348 347h8l-4 5z" fill="#2e8b2e"/>
<path d="M378 337l10 12M388 337l-10 12" stroke="#d8141c" stroke-width="2.400"/>
<path d="M399 344l4 5 9-12" fill="none" stroke="#3d8b1f" stroke-width="2.400"/>
<rect x="425" y="333" width="120" height="18" fill="#fff"/><rect x="533" y="333" width="12" height="18" fill="#efefef"/>
<use href="#downarr" x="536" y="341"/>
<text x="428" y="345" font-size="12" font-weight="bold" style="fill:#666;font-family:'Liberation Serif',serif">T</text><text x="433" y="348" font-size="12" font-weight="bold" style="font-family:'Liberation Serif',serif">T</text>
<text x="443" y="346" font-size="11.500" textLength="20.500" lengthAdjust="spacingAndGlyphs">Arial</text>
<rect x="553" y="333" width="43" height="18" fill="#fff"/><rect x="584" y="333" width="12" height="18" fill="#efefef"/>
<text x="556" y="346" font-size="12" textLength="10" lengthAdjust="spacingAndGlyphs">11</text><use href="#downarr" x="587" y="341"/>
<text x="611" y="347" font-size="13" font-weight="bold" style="fill:#777;font-family:'Liberation Serif',serif">B</text>
<text x="635" y="347" font-size="13" font-weight="bold" font-style="italic" style="fill:#777;font-family:'Liberation Serif',serif">I</text>
<text x="655" y="346" font-size="13" style="fill:#777;font-family:'Liberation Serif',serif">U</text><path d="M655 349.500h10" stroke="#666"/>
<use href="#dltl" x="685" y="335"/><use href="#dltc" x="709" y="335"/><use href="#dltr" x="732" y="335"/>
<rect x="751.500" y="331.500" width="22" height="22" fill="#d9e9fb" stroke="#3f9ad8"/><use href="#dltj" x="755" y="335"/>
<path d="M788 337h9M788 342h9M788 347h9" stroke="#444"/><circle cx="785" cy="337" r="1.500" fill="#8aa8d8"/><circle cx="785" cy="342" r="1.500" fill="#8aa8d8"/><circle cx="785" cy="347" r="1.500" fill="#8aa8d8"/>
<!-- dialog ruler -->
<path d="M237 361.500H860M237 372.500H858" stroke="#aaa"/>
<path d="M279.500 369v5M319.500 369v5M359.500 369v5M399.500 369v5M439.500 369v5M479.500 369v5M519.500 369v5M559.500 369v5M599.500 369v5M639.500 369v5M679.500 369v5M719.500 369v5M759.500 369v5M799.500 369v5M839.500 369v5" stroke="#5b9bd5"/>
<path d="M279.500 374v5M319.500 374v5M359.500 374v5M399.500 374v5M439.500 374v5M479.500 374v5M519.500 374v5M559.500 374v5M599.500 374v5M639.500 374v5M679.500 374v5M719.500 374v5M759.500 374v5M799.500 374v5M839.500 374v5" stroke="#e0a050"/>
<path d="M243 363v8M240 368l3 4 3-4" fill="none" stroke="#000" stroke-width="2"/>
<path d="M240 384v-8M237 379l3-4 3 4" fill="none" stroke="#000" stroke-width="2"/>
<path d="M853 384v-8M850 379l3-4 3 4" fill="none" stroke="#000" stroke-width="2"/>
<!-- edit box -->
<rect x="237.500" y="387" width="624" height="239" fill="#fff"/>
<path d="M237.500 387.500H861.500" stroke="#777" stroke-width="1.500"/><path d="M237.500 387v239" stroke="#888"/>
<path d="M243.500 393v16" stroke="#000"/>
<path d="M243 558.500h593M243 577.500h104" stroke="#000"/>
<rect x="843.500" y="388.500" width="16" height="237" fill="#fff" stroke="#bbb"/>
<rect x="844" y="405" width="15" height="47" fill="#dcdcdc" stroke="#bbb"/>
<path d="M847 399l4-4 4 4" fill="none" stroke="#888" stroke-width="1.300"/>
<path d="M844 611.500h15" stroke="#bbb"/><path d="M847 616l4 4 4-4" fill="none" stroke="#888" stroke-width="1.300"/>
<path d="M848 425h7M848 428h7M848 431h7" stroke="#777" stroke-width="1.300"/>
</svg>

<div id="clip">
<div class="j" style="left:8px;top:31px;width:592px">Através do presente instrumento, eu [CdsGrid."Nome"], &nbsp;inscrito(a) no RG sob nº</div>
<div class="j" style="left:5px;top:50px;width:595px">[CdsGrid."RG"] e &nbsp;CPF: [CdsGrid."C.P.F."], registrado(a) na [CdsEmpresaAtiva."Razão</div>
<div class="j" style="left:5px;top:69px;width:595px">Social"], inscrita no CNPJ sob nº [CdsEmpresaAtiva."CNPJ"], com sede na</div>
<div class="j" style="left:5px;top:88px;width:595px">[CdsEmpresaAtiva."TipoLogradouro"]<b>.</b> [CdsEmpresaAtiva."Logradouro"],</div>
<div class="j" style="left:5px;top:108px;width:597px">[CdsEmpresaAtiva."Nrº."], CEP: [CdsEmpresaAtiva."Cep"], [CdsEmpresaAtiva."Cidade"]/</div>
<div class="j n" style="left:5px;top:128px;width:595px">[CdsEmpresaAtiva."UF"], &nbsp;é data de admissão [CdsGrid."Data Admissão"].</div>
<div class="j b" style="left:8px;top:196px;width:591px">O desconto da contribuição sindical está condicionado à autorização prévia e</div>
<div class="j b" style="left:8px;top:215px;width:591px">expressa dos que participarem de uma determinada categoria econômica ou</div>
<div class="j b" style="left:8px;top:233px;width:591px">profissão liberal, em favor do sindicato representativo da</div>
</div>
</body>
</html>
